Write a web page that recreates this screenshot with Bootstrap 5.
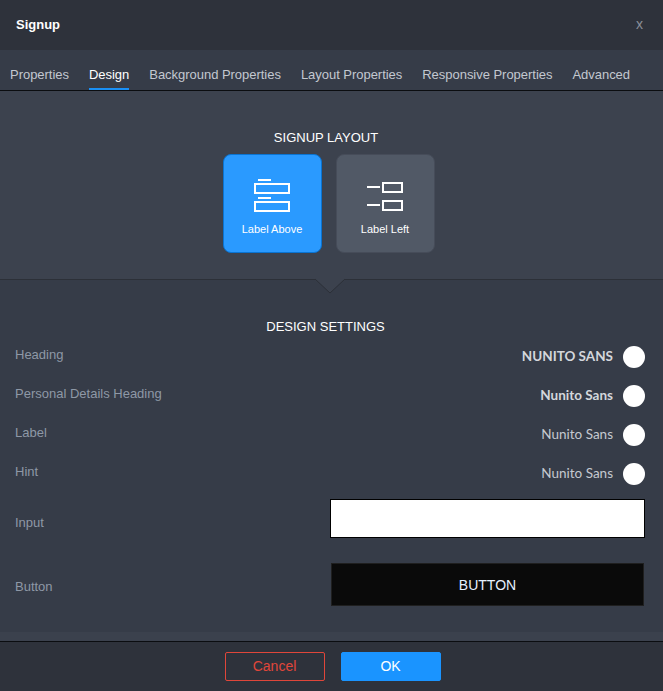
<!DOCTYPE html>
<html lang="en"><head><meta charset="utf-8"><title>Signup</title>
<link href="https://cdn.jsdelivr.net/npm/bootstrap@5.3.0/dist/css/bootstrap.min.css" rel="stylesheet">
<style>
html,body{height:691px;overflow:hidden}
body{background:#3b414d;font-family:"Liberation Sans",Arial,sans-serif;color:#fff;display:flex;flex-direction:column}
.dlg-head{height:50px;background:#2e323b;padding:0 16px}
.dlg-title{font-size:13px;font-weight:700}
.dlg-x{font-size:14px;color:#8a8f99;line-height:1;margin-right:4px;padding-bottom:2px}
.tabbar{height:41px;background:#363c48;border-bottom:1px solid #0b0d10;padding:0 0 0 10px;gap:20px}
.tabitem{font-size:13px;letter-spacing:-.03px;color:#c3c8d0;height:40px;line-height:50px;text-decoration:none;display:block}
.tabitem.on{color:#fff;box-shadow:inset 0 -2px 0 #1a90f5}
.layout-sec{height:189px;background:#3c424e;border-bottom:1px solid #2c3038;position:relative;padding-top:39px}
.sec-title{font-size:13px;line-height:16px;color:#fff;text-align:center}
.layout-title{padding-right:11px}
.tiles{gap:14px;margin-top:8px;padding-right:6px}
.tile{width:99px;height:99px;border-radius:8px;background:#515966;border:1px solid #464c59;color:#fff;font-size:11px;padding-top:24px;text-align:center}
.tile.on{background:#2a9aff;border-color:#0a74d2}
.tile svg{display:block;margin:0 auto 8px}
.notch{position:absolute;left:315px;bottom:-14px;width:30px;height:14px;overflow:visible}
.design-sec{height:353px;background:#363c48;padding:39px 18px 0 15px}
.design-title{margin-bottom:6px;margin-left:-9px}
.set-row{height:39px;font-size:13px;color:#8e98a6}
.set-row>span:first-child{line-height:17px;padding-top:5px}
.font-pick{font-family:Lato,"Open Sans",sans-serif;font-size:13.5px;color:#c5c9d0;margin-right:10px;margin-top:7px;line-height:17px}
.font-pick.b{font-weight:700;color:#d4d7dc}
.swatch{width:22px;height:22px;border-radius:50%;background:#fff;margin-top:5px}
.field-row{font-size:13px;color:#8e98a6}
.input-box{width:315px;height:39px;background:#fff;border:1px solid #000}
.btn-box{width:313px;height:43px;margin-right:1px;background:#0a0a0a;border:1px solid #1f1f1f;border-radius:0;color:#e6f0ff;font-size:14px;padding:2px 0 0;--bs-btn-hover-bg:#0a0a0a;--bs-btn-hover-color:#fff}
.row-input{margin-top:2px}
.row-input>span:first-child{padding-top:10px}
.row-btn{margin-top:25px}
.row-btn>span:first-child{padding-top:6px}
.gap-strip{height:9px;background:#3b414d;border-bottom:0}
.dlg-foot{height:50px;background:#2e323b;border-top:1px solid #0b0d10;gap:16px;padding:10px 0 0 2px}
.act{width:100px;height:29px;border-radius:2px;font-size:14px;padding:0;line-height:27px}
.act-c{border:1px solid #e0463a;color:#e0463a;background:transparent}
.act-o{background:#1a94ff;border:1px solid #1a94ff;color:#fff}
</style></head><body>
<div class="dlg-head d-flex align-items-center justify-content-between">
<span class="dlg-title">Signup</span><span class="dlg-x">x</span></div>
<nav class="tabbar d-flex">
<a class="tabitem" href="#">Properties</a><a class="tabitem on" href="#">Design</a><a class="tabitem" href="#">Background Properties</a><a class="tabitem" href="#">Layout Properties</a><a class="tabitem" href="#">Responsive Properties</a><a class="tabitem" href="#">Advanced</a>
</nav>
<section class="layout-sec">
<div class="sec-title layout-title">SIGNUP LAYOUT</div>
<div class="tiles d-flex justify-content-center">
<div class="tile on">
<svg width="36" height="34" viewBox="0 0 36 34" fill="none" stroke="#fff" stroke-width="2"><path d="M4 1H17"/><rect x="1" y="5" width="34" height="9"/><path d="M4 19H17"/><rect x="1" y="23" width="34" height="9"/></svg>
Label Above</div>
<div class="tile">
<svg width="36" height="34" viewBox="0 0 36 34" fill="none" stroke="#fff" stroke-width="2"><path d="M0 8H13"/><rect x="16" y="4" width="19" height="9"/><path d="M0 26H13"/><rect x="16" y="22" width="19" height="9"/></svg>
Label Left</div>
</div>
<svg class="notch" viewBox="0 0 30 14"><path d="M0 0L15 14L30 0Z" fill="#3c424e"/><path d="M0 0L15 14L30 0" fill="none" stroke="#2c3038"/></svg>
</section>
<section class="design-sec">
<div class="sec-title design-title">DESIGN SETTINGS</div>
<div class="set-row d-flex justify-content-between"><span>Heading</span><div class="d-flex"><span class="font-pick b">NUNITO SANS</span><span class="swatch"></span></div></div>
<div class="set-row d-flex justify-content-between"><span>Personal Details Heading</span><div class="d-flex"><span class="font-pick b">Nunito Sans</span><span class="swatch"></span></div></div>
<div class="set-row d-flex justify-content-between"><span>Label</span><div class="d-flex"><span class="font-pick">Nunito Sans</span><span class="swatch"></span></div></div>
<div class="set-row d-flex justify-content-between"><span>Hint</span><div class="d-flex"><span class="font-pick">Nunito Sans</span><span class="swatch"></span></div></div>
<div class="field-row row-input d-flex justify-content-between align-items-center"><span>Input</span><div class="input-box"></div></div>
<div class="field-row row-btn d-flex justify-content-between align-items-center"><span>Button</span><button class="btn btn-box" type="button">BUTTON</button></div>
</section>
<div class="gap-strip"></div>
<footer class="dlg-foot d-flex justify-content-center">
<button class="btn act act-c" type="button">Cancel</button><button class="btn act act-o" type="button">OK</button>
</footer>
</body></html>
